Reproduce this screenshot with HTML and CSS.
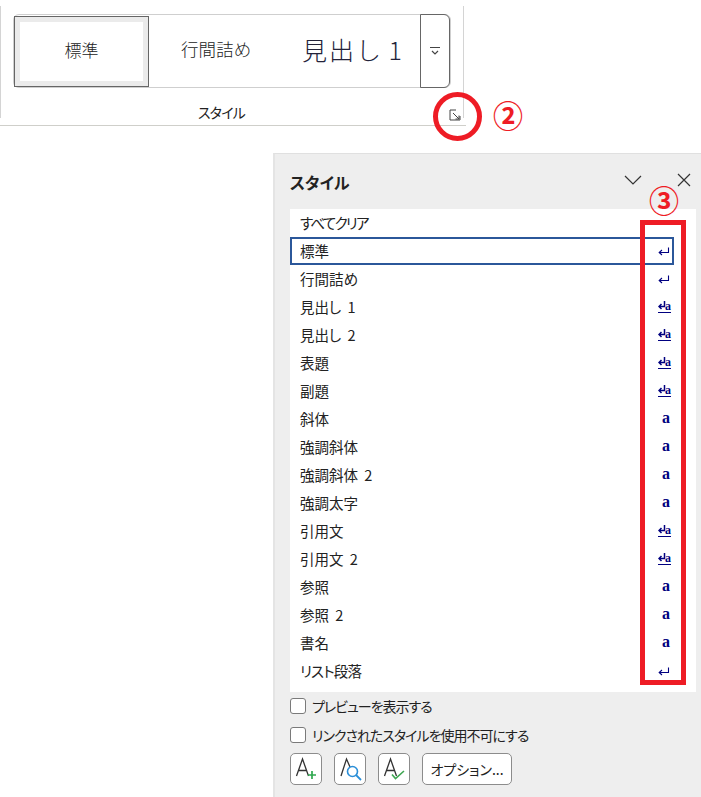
FILE: index.html
```html
<!DOCTYPE html>
<html lang="ja">
<head>
<meta charset="utf-8">
<title>スタイル</title>
<link rel="stylesheet" href="styles.css">
</head>
<body>
<svg class="defs" width="0" height="0" aria-hidden="true">
  <symbol id="ret" viewBox="0 0 12 9"><path d="M10.500 0.500V5.500H2M4 3 1.200 5.500 4 8" fill="none" stroke="#000080" stroke-width="1.100"/></symbol>
  <symbol id="ret-s" viewBox="0 0 8 9"><path d="M6.500 0V5.500H1.500M3.500 3 1 5.500 3.500 8" fill="none" stroke="#000080" stroke-width="1.500"/></symbol>
</svg>
<div class="page">
  <section class="ribbon">
    <div class="ribbon-body">
      <div class="gallery">
        <div class="cell cell-normal"><span>標準</span></div>
        <div class="cell cell-tight"><span>行間詰め</span></div>
        <div class="cell cell-head"><span>見出し 1</span></div>
        <div class="more">
          <svg width="12" height="10" viewBox="0 0 12 10"><path d="M1 1.500H11M3 5 6 8 9 5" fill="none" stroke="#444" stroke-width="1.200"/></svg>
        </div>
      </div>
      <div class="group-label">スタイル</div>
    </div>
  </section>

  <section class="panel">
    <header class="panel-head">
      <h1>スタイル</h1>
      <svg class="chev" width="18" height="10" viewBox="0 0 18 10"><path d="M1 1 9 9 17 1" fill="none" stroke="#333" stroke-width="1.200"/></svg>
      <svg class="close" width="14" height="14" viewBox="0 0 14 14"><path d="M1 1 13 13M13 1 1 13" fill="none" stroke="#333" stroke-width="1.200"/></svg>
    </header>
    <div class="list">
      <div class="row"><span class="kana">すべてクリア</span></div>
      <div class="row row-sel"><span>標準</span><svg class="ret"><use href="#ret"/></svg></div>
      <div class="row"><span>行間詰め</span><svg class="ret"><use href="#ret"/></svg></div>
      <div class="row"><span>見出し 1</span><span class="link"><svg class="ret-s"><use href="#ret-s"/></svg><b>a</b></span></div>
      <div class="row"><span>見出し 2</span><span class="link"><svg class="ret-s"><use href="#ret-s"/></svg><b>a</b></span></div>
      <div class="row"><span>表題</span><span class="link"><svg class="ret-s"><use href="#ret-s"/></svg><b>a</b></span></div>
      <div class="row"><span>副題</span><span class="link"><svg class="ret-s"><use href="#ret-s"/></svg><b>a</b></span></div>
      <div class="row"><span>斜体</span><b class="char">a</b></div>
      <div class="row"><span>強調斜体</span><b class="char">a</b></div>
      <div class="row"><span>強調斜体 2</span><b class="char">a</b></div>
      <div class="row"><span>強調太字</span><b class="char">a</b></div>
      <div class="row"><span>引用文</span><span class="link"><svg class="ret-s"><use href="#ret-s"/></svg><b>a</b></span></div>
      <div class="row"><span>引用文 2</span><span class="link"><svg class="ret-s"><use href="#ret-s"/></svg><b>a</b></span></div>
      <div class="row"><span>参照</span><b class="char">a</b></div>
      <div class="row"><span>参照 2</span><b class="char">a</b></div>
      <div class="row"><span>書名</span><b class="char">a</b></div>
      <div class="row"><span class="kana-s">リスト段落</span><svg class="ret"><use href="#ret"/></svg></div>
    </div>
    <label class="check"><i class="box"></i><span>プレビューを表示する</span></label>
    <label class="check"><i class="box"></i><span>リンクされたスタイルを使用不可にする</span></label>
    <div class="actions">
      <button class="btn-icon"><svg width="30" height="30" viewBox="0 0 30 30"><path d="M5.500 22 11.500 5 17.500 22M7.500 16.500H15.500" fill="none" stroke="#333" stroke-width="1.300"/><path d="M21 17V25M17 21H25" fill="none" stroke="#2fa84f" stroke-width="1.700"/></svg></button>
      <button class="btn-icon"><svg width="30" height="30" viewBox="0 0 30 30"><path d="M6 22 11.500 5 15 13" fill="none" stroke="#333" stroke-width="1.300"/><circle cx="17.500" cy="17.500" r="5" fill="none" stroke="#2b8fd8" stroke-width="1.600"/><path d="M21 21 26 26" stroke="#2b8fd8" stroke-width="1.800"/></svg></button>
      <button class="btn-icon"><svg width="30" height="30" viewBox="0 0 30 30"><path d="M5.500 22 11.500 5 17.500 22M7.500 16.500H15.500" fill="none" stroke="#333" stroke-width="1.300"/><path d="M13 20.500 16.500 24.500 25 17" fill="none" stroke="#3fa652" stroke-width="1.600"/></svg></button>
      <button class="btn-opt">オプション...</button>
    </div>
  </section>

  <svg class="launcher" width="12" height="12" viewBox="0 0 12 12"><path d="M11 7V11H1V1H7M4 4 10 10M6.500 10H10V6.500" fill="none" stroke="#444" stroke-width="1"/></svg>
  <div class="ring"></div>
  <div class="num num-2">②</div>
  <div class="num num-3">③</div>
  <div class="red-box"></div>
</div>
</body>
</html>
```
FILE: styles.css
```css
* { box-sizing: border-box; }
html, body { margin: 0; padding: 0; background: #fff; }
body {
  font-family: "Noto Sans CJK JP", "Noto Sans", sans-serif;
  color: #222;
  font-feature-settings: "palt";
}
.defs { position: absolute; }
.page {
  position: relative;
  width: 701px;
  height: 797px;
  overflow: hidden;
  padding-top: 6px;
}

/* ribbon */
.ribbon {
  width: 466px;
  height: 120px;
  border-bottom: 1px solid #cfcfca;
}
.ribbon-body {
  width: 464px;
  height: 112px;
  padding: 8px 12px 0 12px;
  border-left: 1px solid #d4d4d4;
  border-right: 1px solid #d4d4d4;
}
.gallery {
  display: flex;
  width: 438px;
  height: 74px;
  border: 1px solid #cfcfcf;
  border-radius: 6px;
}
.cell {
  display: flex;
  align-items: center;
  justify-content: center;
  height: 72px;
  color: #222;
  font-weight: 300;
  flex: none;
  white-space: nowrap;
}
.cell-normal {
  width: 135px;
  height: 71px;
  margin-top: 1px;
  border: 1px solid #666;
  outline: 5px solid #ebebeb;
  outline-offset: -6px;
  font-size: 17px;
  padding-bottom: 5px;
}
.cell-tight { width: 134px; font-size: 17.500px; padding-bottom: 5px; }
.cell-head {
  width: 137px;
  font-size: 25px;
  letter-spacing: 2px;
  font-feature-settings: normal;
  word-spacing: -2px;
  color: #23233a;
  padding-bottom: 5px;
  padding-left: 3px;
}
.more {
  flex: none;
  width: 30px;
  height: 74px;
  margin: -1px -1px -1px 0;
  display: flex;
  align-items: center;
  justify-content: center;
  border: 1px solid #666;
  border-radius: 0 6px 6px 0;
}
.group-label {
  margin-top: 14px;
  padding-right: 21px;
  text-align: center;
  font-size: 14px;
  line-height: 20px;
  letter-spacing: -0.800px;
}

/* panel */
.panel {
  width: 428px;
  height: 644px;
  margin: 27px 0 0 273px;
  background: #eeeeee;
  border-left: 2px solid #e4e4e4;
  border-top: 1px solid #e0e0e0;
  padding-left: 15px;
}
.panel-head {
  display: flex;
  align-items: center;
  height: 55px;
}
.panel-head h1 {
  margin: 0;
  font-size: 16px;
  font-weight: 700;
  flex: 1;
  color: #222;
}
.chev { margin: -4px 35px 0 0; }
.close { margin: -4px 10px 0 0; }
.list {
  width: 406px;
  height: 483px;
  background: #fff;
}
.row {
  display: flex;
  align-items: center;
  justify-content: space-between;
  width: 384px;
  height: 28px;
  padding: 0 2px 0 10px;
  font-size: 14.500px;
  line-height: 20px;
  word-spacing: 3px;
}
.row > span:first-child { margin-top: -1px; }
.row > .kana:first-child { margin-top: 0; }
.kana { letter-spacing: -1.700px; }
.kana-s { letter-spacing: -0.800px; }
.row-sel { outline: 2px solid #2b579a; outline-offset: -2px; }
.ret { width: 12px; height: 9px; margin-right: 2px; }
.ret-s { width: 8px; height: 9px; flex: none; }
.link {
  display: flex;
  align-items: flex-start;
  height: 12px;
  margin-right: 1px;
  border-bottom: 1.500px solid #000080;
  color: #000080;
  width: 13px;
}
.link b {
  font: 700 12px/10px "Liberation Serif", serif;
  margin-left: -1px;
}
.char {
  margin-right: 2px;
  width: 8px;
  color: #000080;
  font: 700 16px/14px "Liberation Serif", serif;
  margin-top: -2px;
}
.check {
  display: flex;
  align-items: center;
  gap: 6px;
  height: 29px;
  font-size: 14px;
  letter-spacing: -1px;
}
.check span { margin-top: -2px; }
.box {
  width: 16px;
  height: 16px;
  border: 1px solid #7a7a7a;
  border-radius: 3px;
  background: #fff;
  margin-top: -2px;
}
.actions {
  display: flex;
  gap: 12px;
  margin-top: 3px;
}
.btn-icon, .btn-opt {
  height: 32px;
  padding: 0;
  border: 1px solid #8c8c8c;
  border-radius: 5px;
  background: #fff;
  font-family: inherit;
  color: #222;
  display: flex;
  align-items: center;
  justify-content: center;
  font-feature-settings: "palt";
}
.btn-icon { width: 32px; }
.btn-opt { width: 90px; font-size: 14px; }

/* annotations */
.launcher { position: absolute; left: 449px; top: 109px; }
.ring {
  position: absolute;
  left: 433px;
  top: 92px;
  width: 49px;
  height: 49px;
  border: 5px solid #ee1c25;
  border-radius: 50%;
}
.num {
  position: absolute;
  color: #ee1c25;
  font-size: 30px;
  line-height: 30px;
  font-weight: 700;
}
.num-2 { left: 493px; top: 99px; }
.num-3 { left: 649px; top: 184px; }
.red-box {
  position: absolute;
  left: 640px;
  top: 220px;
  width: 46px;
  height: 465px;
  border: 5px solid #ee1c25;
}
```
